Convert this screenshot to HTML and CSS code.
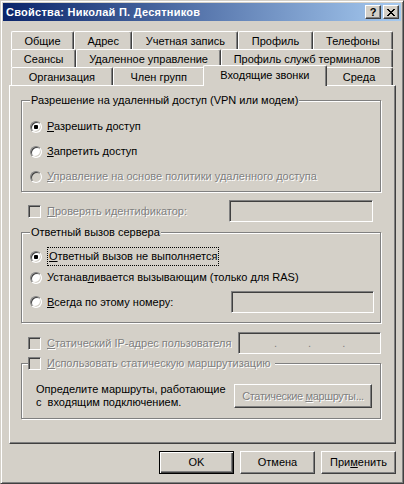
FILE: index.html
```html
<!DOCTYPE html>
<html lang="ru">
<head>
    <meta charset="UTF-8">
    <title>Свойства: Николай П. Десятников</title>
    <link rel="stylesheet" href="styles.css">
</head>
<body>
    <div class="window">
        <div class="titlebar">
            <span class="title">Свойства: Николай П. Десятников</span>
            <span class="cap-btn">?</span>
            <span class="cap-btn close">
                <svg width="8" height="7" viewBox="0 0 8 7"><path d="M0 0h2v1h1v1h2v-1h1v-1h2v1h-1v1h-1v1h-1v1h1v1h1v1h1v1h-2v-1h-1v-1h-2v1h-1v1h-2v-1h1v-1h1v-1h1v-1h-1v-1h-1v-1h-1z" fill="#000"/></svg>
            </span>
        </div>

        <div class="client">
            <div class="tabs">
                <div class="tab-row">
                    <span class="tab">Общие</span>
                    <span class="tab">Адрес</span>
                    <span class="tab">Учетная запись</span>
                    <span class="tab">Профиль</span>
                    <span class="tab">Телефоны</span>
                </div>
                <div class="tab-row">
                    <span class="tab">Сеансы</span>
                    <span class="tab">Удаленное управление</span>
                    <span class="tab">Профиль служб терминалов</span>
                </div>
                <div class="tab-row">
                    <span class="tab">Организация</span>
                    <span class="tab">Член групп</span>
                    <span class="tab active">Входящие звонки</span>
                    <span class="tab">Среда</span>
                </div>
            </div>

            <div class="panel">
                <div class="group">
                    <div class="group-title">Разрешение на удаленный доступ (VPN или модем)</div>
                    <div class="options access">
                        <div class="option"><span class="radio on"></span><span><u>Р</u>азрешить доступ</span></div>
                        <div class="option"><span class="radio"></span><span><u>З</u>апретить доступ</span></div>
                        <div class="option disabled"><span class="radio"></span><span><u>У</u>правление на основе политики удаленного доступа</span></div>
                    </div>
                </div>

                <div class="field-row row-verify">
                    <div class="option disabled"><span class="check"></span><span><u>П</u>роверять идентификатор:</span></div>
                    <span class="textbox verify-box"></span>
                </div>

                <div class="group callback">
                    <div class="group-title">Ответный вызов сервера</div>
                    <div class="options">
                        <div class="option"><span class="radio on"></span><span class="focus"><u>О</u>тветный вызов не выполняется</span></div>
                        <div class="option"><span class="radio"></span><span>Устанав<u>л</u>ивается вызывающим (только для RAS)</span></div>
                        <div class="field-row">
                            <div class="option"><span class="radio"></span><span><u>В</u>сегда по этому номеру:</span></div>
                            <span class="textbox number-box"></span>
                        </div>
                    </div>
                </div>

                <div class="field-row row-ip">
                    <div class="option disabled"><span class="check"></span><span><u>С</u>татический IP-адрес пользователя</span></div>
                    <span class="textbox ip-box"><span>.</span><span>.</span><span>.</span></span>
                </div>

                <div class="group routes">
                    <div class="group-title option disabled"><span class="check"></span><span><u>И</u>спользовать статическую маршрутизацию</span></div>
                    <div class="route-row">
                        <div class="route-text">Определите маршруты, работающие<br>с&nbsp; входящим подключением.</div>
                        <span class="btn route-btn disabled"><span>Статические <u>м</u>аршруты...</span></span>
                    </div>
                </div>
            </div>

            <div class="footer">
                <span class="btn default">OK</span>
                <span class="btn">Отмена</span>
                <span class="btn"><span>При<u>м</u>енить</span></span>
            </div>
        </div>
    </div>
</body>
</html>
```

FILE: styles.css
```css
* {
    box-sizing: border-box;
}
body {
    margin: 0;
    background: #d4d0c8;
    font-family: "Liberation Sans", Arial, sans-serif;
    font-size: 11px;
    line-height: 13px;
    color: #000;
}
u {
    text-decoration: underline;
    text-underline-offset: 1px;
}

/* window frame */
.window {
    width: 404px;
    height: 484px;
    display: flex;
    flex-direction: column;
    padding: 2px;
    background: #d4d0c8;
    border: 1px solid;
    border-color: #d4d0c8 #404040 #404040 #d4d0c8;
    box-shadow: inset 1px 1px #fff, inset -1px -1px #808080;
}
.titlebar {
    height: 18px;
    display: flex;
    align-items: center;
    padding: 0 2px;
    background: linear-gradient(to right, #0a246a, #a6caf0);
    color: #fff;
}
.title {
    flex: 1;
    font-weight: bold;
    letter-spacing: 0.25px;
    padding-left: 1px;
}
.cap-btn {
    width: 16px;
    height: 14px;
    display: flex;
    align-items: center;
    justify-content: center;
    background: #d4d0c8;
    color: #000;
    font-weight: bold;
    border: 1px solid;
    border-color: #fff #404040 #404040 #fff;
    box-shadow: inset -1px -1px #808080;
}
.cap-btn.close {
    margin-left: 2px;
}

.client {
    flex: 1;
    display: flex;
    flex-direction: column;
    padding: 10px 5px 7px 6px;
}

/* tabs */
.tabs {
    padding: 0 3px 0 2px;
}
.tab-row {
    display: flex;
    height: 18px;
}
.tab {
    flex: 1 1 auto;
    height: 18px;
    padding: 3px 0 0;
    text-align: center;
    white-space: nowrap;
    background: #d4d0c8;
    border: 1px solid;
    border-bottom: 0;
    border-color: #fff #404040 #404040 #fff;
    border-radius: 2px 2px 0 0;
    box-shadow: inset -1px 0 #808080;
}
.tab.active {
    height: 21px;
    margin: -2px -2px 0;
    position: relative;
    z-index: 1;
}

.panel {
    flex: 1;
    padding: 14px 14px 0 11px;
    border: 1px solid;
    border-color: #fff #404040 #404040 #fff;
    box-shadow: inset -1px -1px #808080;
}

/* group boxes */
.group {
    border: 1px solid #808080;
    box-shadow: inset 1px 1px #fff, 1px 1px #fff;
    padding-bottom: 8px;
}
.group-title {
    width: fit-content;
    margin: -7px 0 0 8px;
    padding: 0 1px;
    background: #d4d0c8;
}
.options {
    display: flex;
    flex-direction: column;
    padding-left: 8px;
}
.access {
    margin-top: 13px;
    gap: 12px;
}

.option {
    display: flex;
    align-items: center;
    height: 13px;
    white-space: nowrap;
}
.disabled {
    color: #808080;
    text-shadow: 1px 1px #fff;
}
.radio {
    flex: none;
    width: 12px;
    height: 12px;
    margin-right: 5px;
    border-radius: 50%;
    background: #fff;
    border: 1px solid;
    border-color: #808080 #fff #fff #808080;
    box-shadow: inset 1px 1px #404040, inset -1px -1px #d4d0c8;
}
.radio.on {
    background: radial-gradient(circle, #000 0 2px, #fff 2.5px);
}
.disabled .radio {
    background: #d4d0c8;
}
.check {
    flex: none;
    width: 13px;
    height: 13px;
    margin-right: 6px;
    background: #d4d0c8;
    border: 1px solid;
    border-color: #808080 #fff #fff #808080;
    box-shadow: inset 1px 1px #404040, inset -1px -1px #d4d0c8;
}
.focus {
    border: 1px dotted #000;
    padding: 2px 1px;
    margin: -3px 0;
}

.textbox {
    display: block;
    height: 22px;
    background: #d4d0c8;
    border: 1px solid;
    border-color: #808080 #fff #fff #808080;
    box-shadow: inset 1px 1px #404040, inset -1px -1px #d4d0c8;
}

.field-row {
    display: flex;
    align-items: center;
    height: 22px;
}
.field-row .textbox {
    margin-left: auto;
}
.row-verify {
    margin-top: 8px;
    padding-left: 7px;
}
.verify-box {
    width: 144px;
    margin-right: 8px;
}

.callback {
    margin-top: 10px;
    padding-bottom: 9px;
}
.callback .options {
    margin-top: 11px;
}
.callback .option + .option {
    margin-top: 8px;
}
.callback .field-row {
    margin-top: 7px;
}
.number-box {
    width: 143px;
    margin-right: 6px;
}

.row-ip {
    margin-top: 9px;
    padding-left: 7px;
}
.ip-box {
    width: 143px;
    display: flex;
    gap: 31px;
    padding-left: 35px;
    line-height: 20px;
    color: #808080;
}

.routes {
    margin-top: 9px;
    padding-bottom: 9px;
}
.routes .group-title {
    margin-left: 6px;
    padding: 0 4px 0 0;
}
.route-row {
    display: flex;
    align-items: center;
    margin-top: 13px;
    padding-left: 14px;
}

/* push buttons */
.btn {
    width: 75px;
    height: 23px;
    display: flex;
    align-items: center;
    justify-content: center;
    white-space: nowrap;
    background: #d4d0c8;
    border: 1px solid;
    border-color: #fff #404040 #404040 #fff;
    box-shadow: inset -1px -1px #808080;
}
.btn.default {
    border-color: #000;
    box-shadow: inset 1px 1px #fff, inset -1px -1px #404040, inset -2px -2px #808080;
}
.btn.route-btn {
    width: 138px;
    height: 24px;
    margin: 0 8px 0 auto;
    letter-spacing: -0.35px;
}
.footer {
    display: flex;
    justify-content: flex-end;
    gap: 6px;
    margin-top: 7px;
}
```
